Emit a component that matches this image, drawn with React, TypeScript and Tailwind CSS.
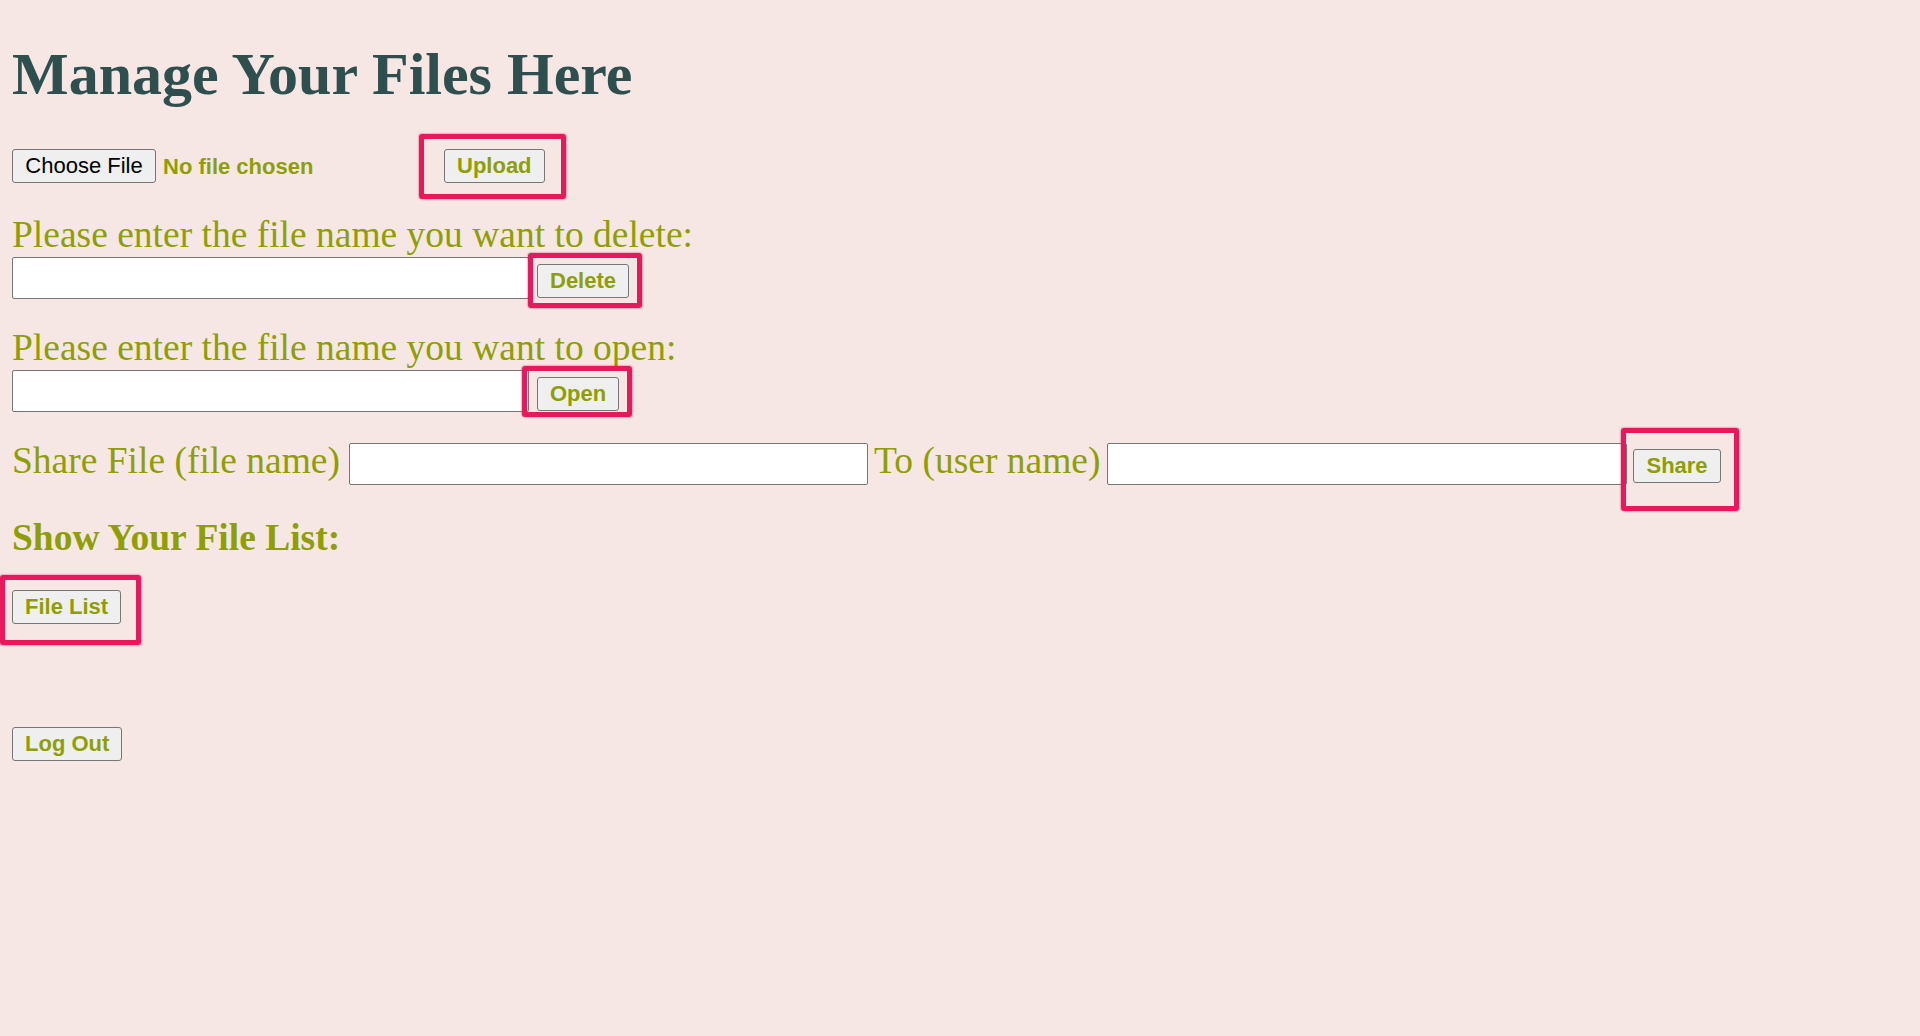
import React from "react";

const serif = "font-['Liberation_Serif','Times_New_Roman',serif]";
const sans = "font-['Liberation_Sans',Arial,sans-serif]";

function Btn({ label, className = "" }: { label: string; className?: string }) {
  return (
    <button
      type="button"
      className={`${sans} flex h-[34px] shrink-0 items-center justify-center rounded-[3px] border border-[#767676] bg-[#efefef] px-[12px] text-[22px] font-bold leading-none text-[#8e9e04] ${className}`}
    >
      {label}
    </button>
  );
}

function TextBox({ className = "" }: { className?: string }) {
  return <input type="text" className={`h-[42px] shrink-0 rounded-[2px] border border-[#767676] bg-white ${className}`} />;
}

// annotation frames drawn over the screenshot
function Mark({ className }: { className: string }) {
  return <div className={`pointer-events-none absolute rounded-[3px] border-[5px] border-[#e8185c] shadow-[0_0_2px_#e8185c] ${className}`} />;
}

export default function App() {
  return (
    <div className="relative min-h-screen w-full bg-[#f6e7e5] pl-[12px]">
      <h1 className={`${serif} pt-[40px] text-[60px] font-bold leading-[68px] text-[#2f4f4f]`}>Manage Your Files Here</h1>

      {/* upload */}
      <div className="mt-[41px] flex h-[34px] items-center">
        <button
          type="button"
          className={`${sans} flex h-[34px] w-[144px] items-center justify-center rounded-[3px] border border-[#767676] bg-[#efefef] text-[22px] leading-none text-black`}
        >
          Choose File
        </button>
        <span className={`${sans} ml-[7px] w-[281px] text-[22px] font-bold text-[#8e9e04]`}>No file chosen</span>
        <Btn label="Upload" />
      </div>

      {/* delete */}
      <div className={`${serif} mt-[31px] text-[37.5px] leading-[42px] text-[#8e9e04]`}>Please enter the file name you want to delete:</div>
      <div className="mt-[1px] flex items-start">
        <TextBox className="w-[517px]" />
        <Btn label="Delete" className="ml-[8px] mt-[7px]" />
      </div>

      {/* open */}
      <div className={`${serif} mt-[28px] text-[37.5px] leading-[42px] text-[#8e9e04]`}>Please enter the file name you want to open:</div>
      <div className="mt-[1px] flex items-start">
        <TextBox className="w-[517px]" />
        <Btn label="Open" className="ml-[8px] mt-[7px]" />
      </div>

      {/* share */}
      <div className="mt-[31px] flex items-start">
        <span className={`${serif} text-[37.5px] leading-[35px] text-[#8e9e04]`}>Share File (file name)</span>
        <TextBox className="ml-[9px] h-[41px] w-[519px]" />
        <span className={`${serif} ml-[6px] text-[37.5px] leading-[35px] text-[#8e9e04]`}>To (user name)</span>
        <TextBox className="ml-[7px] h-[41px] w-[520px]" />
        <Btn label="Share" className="ml-[6px] mt-[6px]" />
      </div>

      <h3 className={`${serif} mt-[33px] text-[37.5px] font-bold leading-[40px] text-[#8e9e04]`}>Show Your File List:</h3>
      <div className="mt-[32px] flex">
        <Btn label="File List" className="h-[33px]" />
      </div>

      <div className="mt-[103px] flex">
        <Btn label="Log Out" />
      </div>

      <Mark className="left-[419px] top-[134px] h-[65px] w-[147px]" />
      <Mark className="left-[528px] top-[253px] h-[55px] w-[114px]" />
      <Mark className="left-[522px] top-[366px] h-[51px] w-[110px]" />
      <Mark className="left-[1621px] top-[428px] h-[83px] w-[118px]" />
      <Mark className="left-0 top-[575px] h-[70px] w-[141px]" />
    </div>
  );
}
